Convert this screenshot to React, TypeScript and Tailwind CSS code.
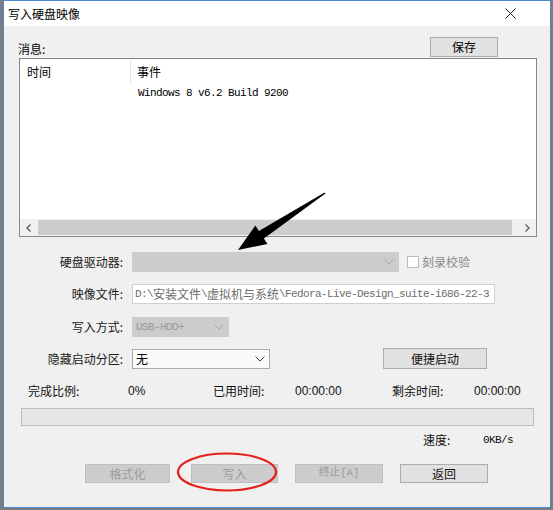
import React from "react";

const cjk = { fontFamily: '"Noto Sans CJK SC", "Liberation Sans", sans-serif' };
const mono = { fontFamily: '"Liberation Mono", "Noto Sans CJK SC", monospace' };
const sans = { fontFamily: '"Liberation Sans", "Noto Sans CJK SC", sans-serif' };

const Chevron = ({ color }: { color: string }) => (
  <svg width="10" height="6" viewBox="0 0 10 6" className="shrink-0">
    <path d="M0.5 0.5 L5 5 L9.5 0.5" fill="none" stroke={color} strokeWidth="1" />
  </svg>
);

const Label = ({ children }: { children: React.ReactNode }) => (
  <div className="w-[105px] text-right text-[12px] text-[#1a1a1a] leading-none pr-[1px]">{children}</div>
);

const Btn = ({ children, w, disabled }: { children: React.ReactNode; w: string; disabled?: boolean }) => (
  <div
    className={
      "h-full flex items-center justify-center text-[12px] border " +
      w +
      (disabled ? " bg-[#cccccc] border-[#bfbfbf] text-[#9d9d9d]" : " bg-[#e1e1e1] border-[#adadad] text-[#111]")
    }
  >
    {children}
  </div>
);

export default function App() {
  return (
    <div className="relative w-[553px] h-[510px] bg-[#7c7c7c] pl-[3px] overflow-hidden" style={cjk}>
      <div className="w-[548px] h-[508px] border border-[#4a85d6] flex flex-col bg-[#f0f0f0]">
        {/* title bar */}
        <div className="h-[25px] bg-white flex items-center shrink-0">
          <span className="ml-[4px] text-[12px] text-black">写入硬盘映像</span>
          <svg width="11" height="11" viewBox="0 0 11 11" className="ml-auto mr-[34px]">
            <path d="M0.5 0.5 L10.5 10.5 M10.5 0.5 L0.5 10.5" stroke="#222" strokeWidth="1" />
          </svg>
        </div>

        <div className="flex-1 pl-[15px] flex flex-col">
          {/* message label + save */}
          <div className="mt-[11px] w-[518px] h-[20px] flex items-end">
            <span className="text-[12px] leading-none mb-[2px] ml-[-1px]">消息:</span>
            <div className="ml-auto mr-[39px] h-[20px] w-[68px] flex items-center justify-center text-[12px] bg-[#e1e1e1] border border-[#adadad]">
              保存
            </div>
          </div>

          {/* list */}
          <div className="mt-[1px] w-[518px] h-[179px] border border-[#828790] bg-white flex flex-col">
            <div className="h-[26px] flex text-[12px] shrink-0">
              <div className="w-[111px] pl-[7px] flex items-center border-r border-[#e5e5e5] my-[1px]">时间</div>
              <div className="pl-[6px] flex items-center">事件</div>
            </div>
            <div className="h-[16px] flex items-center">
              <div className="w-[112px]" />
              <span className="pl-[6px] text-[11px] tracking-[-0.6px] text-black" style={mono}>
                Windows 8 v6.2 Build 9200
              </span>
            </div>
            <div className="flex-1" />
            <div className="h-[17px] bg-[#f0f0f0] flex items-center">
              <div className="w-[17px] h-full flex items-center justify-center">
                <svg width="5" height="8" viewBox="0 0 5 8">
                  <path d="M4.5 0.5 L1 4 L4.5 7.5" fill="none" stroke="#606060" strokeWidth="1.4" />
                </svg>
              </div>
              <div className="ml-[1px] w-[474px] h-[15px] bg-[#cdcdcd]" />
              <div className="ml-auto w-[17px] h-full flex items-center justify-center">
                <svg width="5" height="8" viewBox="0 0 5 8">
                  <path d="M0.5 0.5 L4 4 L0.5 7.5" fill="none" stroke="#606060" strokeWidth="1.4" />
                </svg>
              </div>
            </div>
          </div>

          {/* drive */}
          <div className="mt-[15px] h-[20px] flex items-center">
            <Label>硬盘驱动器:</Label>
            <div className="ml-[8px] w-[267px] h-full bg-[#cccccc] border border-[#cccccc] flex items-center justify-end pr-[4px]">
              <Chevron color="#a8a8a8" />
            </div>
            <div className="ml-[8px] w-[12px] h-[12px] bg-white border border-[#bcbcbc]" />
            <span className="ml-[3px] text-[12px] text-[#8a8a8a]">刻录校验</span>
          </div>

          {/* image file */}
          <div className="mt-[12px] h-[20px] flex items-center">
            <Label>映像文件:</Label>
            <div className="ml-[8px] w-[363px] h-full bg-white border border-[#d0d0d0] flex items-center pl-[2px] text-[12px] text-[#6d6d6d] whitespace-nowrap overflow-hidden">
              <span className="text-[11px] tracking-[-0.6px]" style={mono}>D:\</span>
              <span>安装文件</span>
              <span className="text-[11px] tracking-[-0.6px]" style={mono}>\</span>
              <span>虚拟机与系统</span>
              <span className="text-[11px] tracking-[-0.6px]" style={mono}>\Fedora-Live-Design_suite-i686-22-3</span>
            </div>
          </div>

          {/* write mode */}
          <div className="mt-[13px] h-[20px] flex items-center">
            <Label>写入方式:</Label>
            <div className="ml-[8px] w-[97px] h-full bg-[#cccccc] border border-[#cccccc] flex items-center pl-[3px] pr-[4px]">
              <span className="text-[11px] tracking-[-0.6px] text-[#9a9a9a]" style={mono}>USB-HDD+</span>
              <span className="ml-auto">
                <Chevron color="#a8a8a8" />
              </span>
            </div>
          </div>

          {/* hidden partition */}
          <div className="mt-[11px] h-[21px] flex items-center">
            <Label>隐藏启动分区:</Label>
            <div className="ml-[8px] w-[138px] h-[20px] bg-[#fafafa] border border-[#a9a9a9] flex items-center pl-[3px] pr-[4px]">
              <span className="text-[12px]">无</span>
              <span className="ml-auto">
                <Chevron color="#444" />
              </span>
            </div>
            <div className="ml-[113px] h-full">
              <Btn w="w-[104px]">便捷启动</Btn>
            </div>
          </div>

          {/* progress stats */}
          <div className="mt-[14px] h-[16px] flex items-center text-[12px] text-[#111] whitespace-nowrap">
            <span className="ml-[9px] w-[100px]">完成比例:</span>
            <span className="w-[85px]" style={sans}>0%</span>
            <span className="w-[82px]">已用时间:</span>
            <span className="w-[97px]" style={sans}>00:00:00</span>
            <span className="w-[82px]">剩余时间:</span>
            <span style={sans}>00:00:00</span>
          </div>

          <div className="mt-[9px] ml-[2px] w-[513px] h-[18px] bg-[#e6e6e6] border border-[#bcbcbc]" />

          <div className="mt-[6px] h-[16px] flex items-center text-[12px] text-[#111]">
            <span className="ml-[404px] w-[60px]">速度:</span>
            <span className="text-[11px] tracking-[-0.6px]" style={mono}>0KB/s</span>
          </div>

          {/* buttons */}
          <div className="mt-[16px] h-[19px] flex items-center">
            <div className="ml-[66px] h-full">
              <Btn w="w-[85px]" disabled>格式化</Btn>
            </div>
            <div className="ml-[21px] h-full">
              <Btn w="w-[87px]" disabled>写入</Btn>
            </div>
            <div className="ml-[17px] h-full">
              <Btn w="w-[88px]" disabled>
                <span className="text-[11px] tracking-[-0.3px]" style={mono}>终止[A]</span>
              </Btn>
            </div>
            <div className="ml-[17px] h-full">
              <Btn w="w-[88px]">返回</Btn>
            </div>
          </div>
        </div>
      </div>

      {/* annotations */}
      <svg className="absolute left-0 top-0 pointer-events-none" width="553" height="510" viewBox="0 0 553 510">
        <polygon
          points="238,250 255.4,225.5 258.9,230.9 324.6,192.4 325.4,193.6 263.9,238.5 267.4,243.9"
          fill="#000"
        />
        <ellipse cx="227" cy="472" rx="49" ry="18.5" fill="none" stroke="#e3221c" strokeWidth="2.2" />
      </svg>
    </div>
  );
}
